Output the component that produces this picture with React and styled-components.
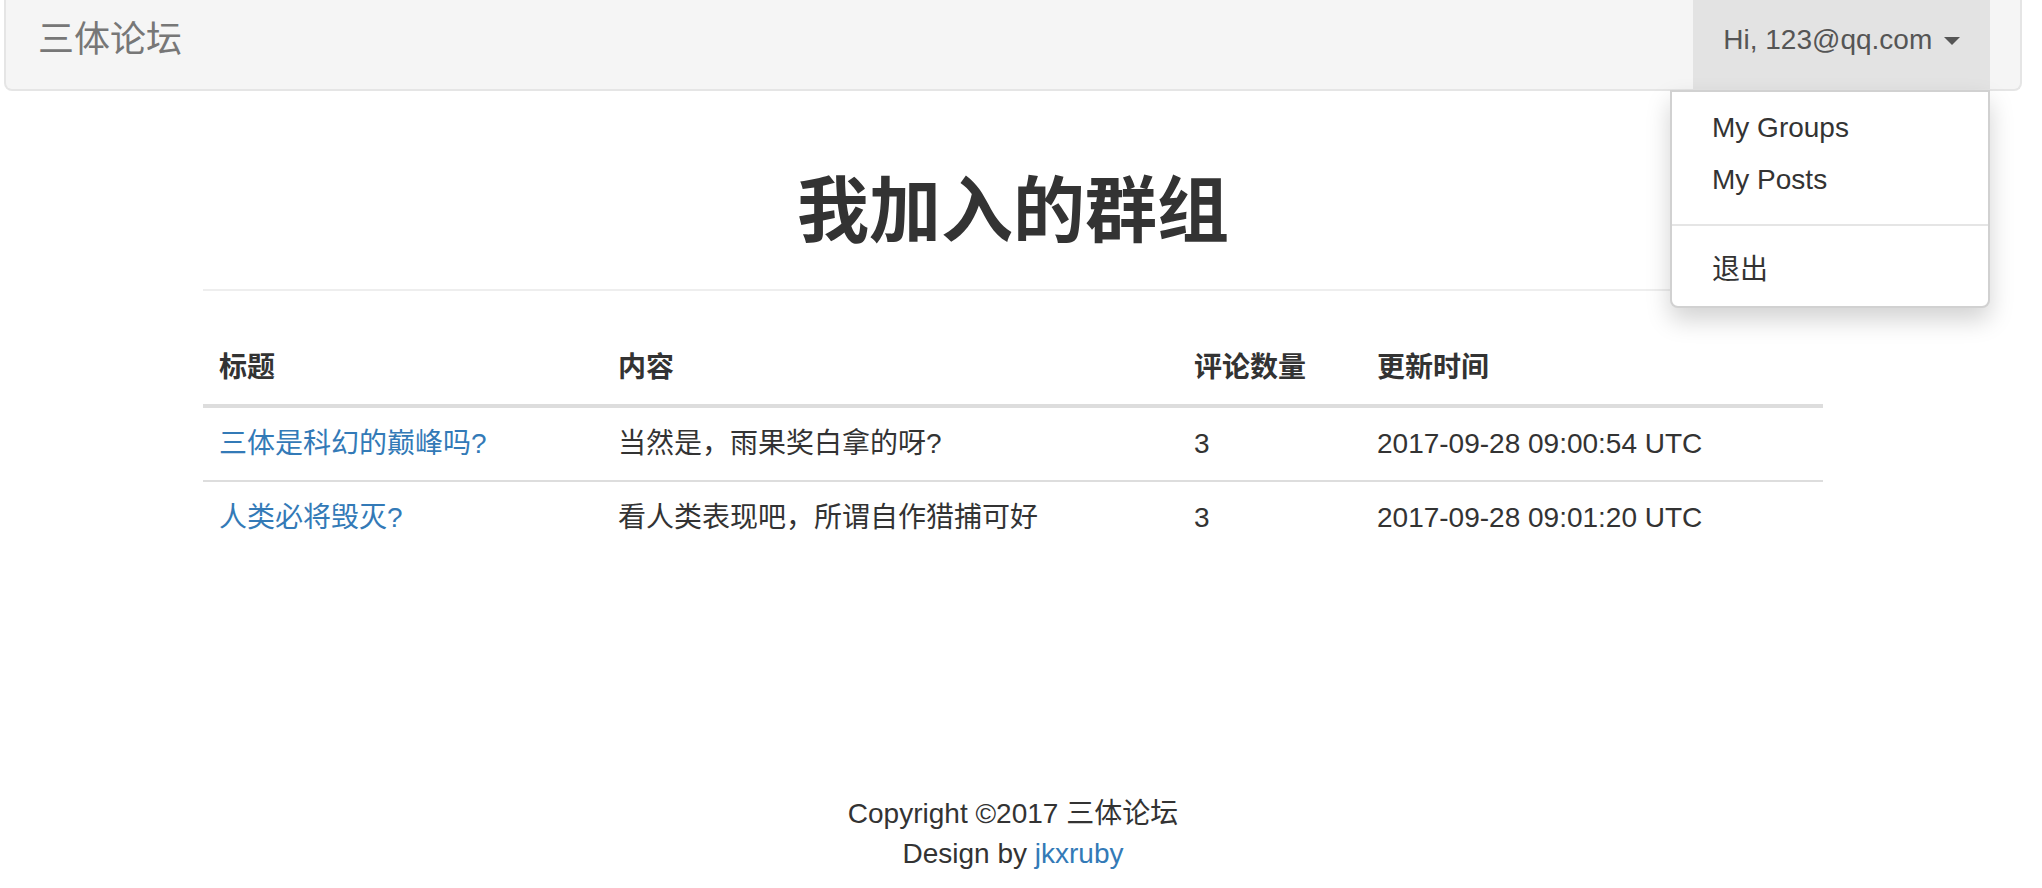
import React from 'react';
import styled, { createGlobalStyle } from 'styled-components';

const GlobalStyle = createGlobalStyle`
  html, body {
    margin: 0;
    padding: 0;
    background: #fff;
  }
  *, *::before, *::after {
    box-sizing: border-box;
  }
  body {
    font-family: "Liberation Sans", "Noto Sans CJK SC", sans-serif;
    font-size: 28px;
    line-height: 40px;
    color: #333;
  }
`;

const Page = styled.div`
  width: 2026px;
`;

const Navbar = styled.nav`
  margin: 0 4px;
  height: 91px;
  display: flex;
  justify-content: space-between;
  align-items: stretch;
  padding: 0 30px 0 32px;
  background: #f5f5f5;
  border: 2px solid #e5e5e5;
  border-top: none;
  border-radius: 0 0 8px 8px;
`;

const Brand = styled.a`
  display: flex;
  align-items: center;
  padding-bottom: 10px;
  font-size: 36px;
  color: #777;
  text-decoration: none;
`;

const NavItem = styled.div`
  position: relative;
  display: flex;
`;

const Toggle = styled.a`
  display: flex;
  align-items: center;
  padding: 0 30px 9px;
  background: #e3e3e3;
  color: #555;
  text-decoration: none;
  white-space: pre;
`;

const Caret = styled.span`
  display: inline-block;
  width: 0;
  height: 0;
  margin-left: 4px;
  margin-top: 2px;
  border-top: 8px solid #555;
  border-left: 8px solid transparent;
  border-right: 8px solid transparent;
`;

const Menu = styled.ul`
  position: absolute;
  top: 100%;
  right: 0;
  margin: 1px 0 0;
  padding: 10px 0;
  min-width: 320px;
  list-style: none;
  background: #fff;
  border: 2px solid rgba(0, 0, 0, 0.18);
  border-radius: 0 0 8px 8px;
  box-shadow: 0 12px 24px rgba(0, 0, 0, 0.175);
  z-index: 10;
`;

const MenuItem = styled.li`
  padding: 6px 40px;
  color: #333;
  white-space: nowrap;
`;

const Divider = styled.li`
  height: 2px;
  margin: 18px 0;
  background: #e5e5e5;
`;

const Main = styled.main`
  width: 1620px;
  margin: 0 auto;
  padding-top: 80px;
`;

const PageHeader = styled.div`
  padding-bottom: 38px;
  border-bottom: 2px solid #eee;
  margin-bottom: 41px;
`;

const Title = styled.h1`
  margin: 0;
  text-align: center;
  font-size: 72px;
  line-height: 80px;
  font-weight: bold;
  color: #333;
`;

const Table = styled.table`
  width: 100%;
  table-layout: fixed;
  border-collapse: collapse;
  border-spacing: 0;
`;

const Th = styled.th`
  width: ${p => p.$w}px;
  padding: 16px;
  text-align: left;
  font-weight: bold;
  border-bottom: 4px solid #ddd;
`;

const Td = styled.td`
  padding: 16px;
  border-top: 2px solid #ddd;
`;

const Link = styled.a`
  color: #337ab7;
  text-decoration: none;
`;

const Footer = styled.footer`
  margin-top: 240px;
  text-align: center;
`;

const rows = [
  { title: '三体是科幻的巅峰吗?', content: '当然是，雨果奖白拿的呀?', count: 3, time: '2017-09-28 09:00:54 UTC' },
  { title: '人类必将毁灭?', content: '看人类表现吧，所谓自作猎捕可好', count: 3, time: '2017-09-28 09:01:20 UTC' },
];

export default function App() {
  return (
    <Page>
      <GlobalStyle />
      <Navbar>
        <Brand href="#">三体论坛</Brand>
        <NavItem>
          <Toggle href="#">Hi, 123@qq.com <Caret /></Toggle>
          <Menu>
            <MenuItem>My Groups</MenuItem>
            <MenuItem>My Posts</MenuItem>
            <Divider />
            <MenuItem>退出</MenuItem>
          </Menu>
        </NavItem>
      </Navbar>

      <Main>
        <PageHeader>
          <Title>我加入的群组</Title>
        </PageHeader>
        <Table>
          <thead>
            <tr>
              <Th $w={399}>标题</Th>
              <Th $w={576}>内容</Th>
              <Th $w={183}>评论数量</Th>
              <Th $w={462}>更新时间</Th>
            </tr>
          </thead>
          <tbody>
            {rows.map(row => (
              <tr key={row.time}>
                <Td><Link href="#">{row.title}</Link></Td>
                <Td>{row.content}</Td>
                <Td>{row.count}</Td>
                <Td>{row.time}</Td>
              </tr>
            ))}
          </tbody>
        </Table>
      </Main>

      <Footer>
        <div>Copyright ©2017 三体论坛</div>
        <div>Design by <Link href="#">jkxruby</Link></div>
      </Footer>
    </Page>
  );
}
